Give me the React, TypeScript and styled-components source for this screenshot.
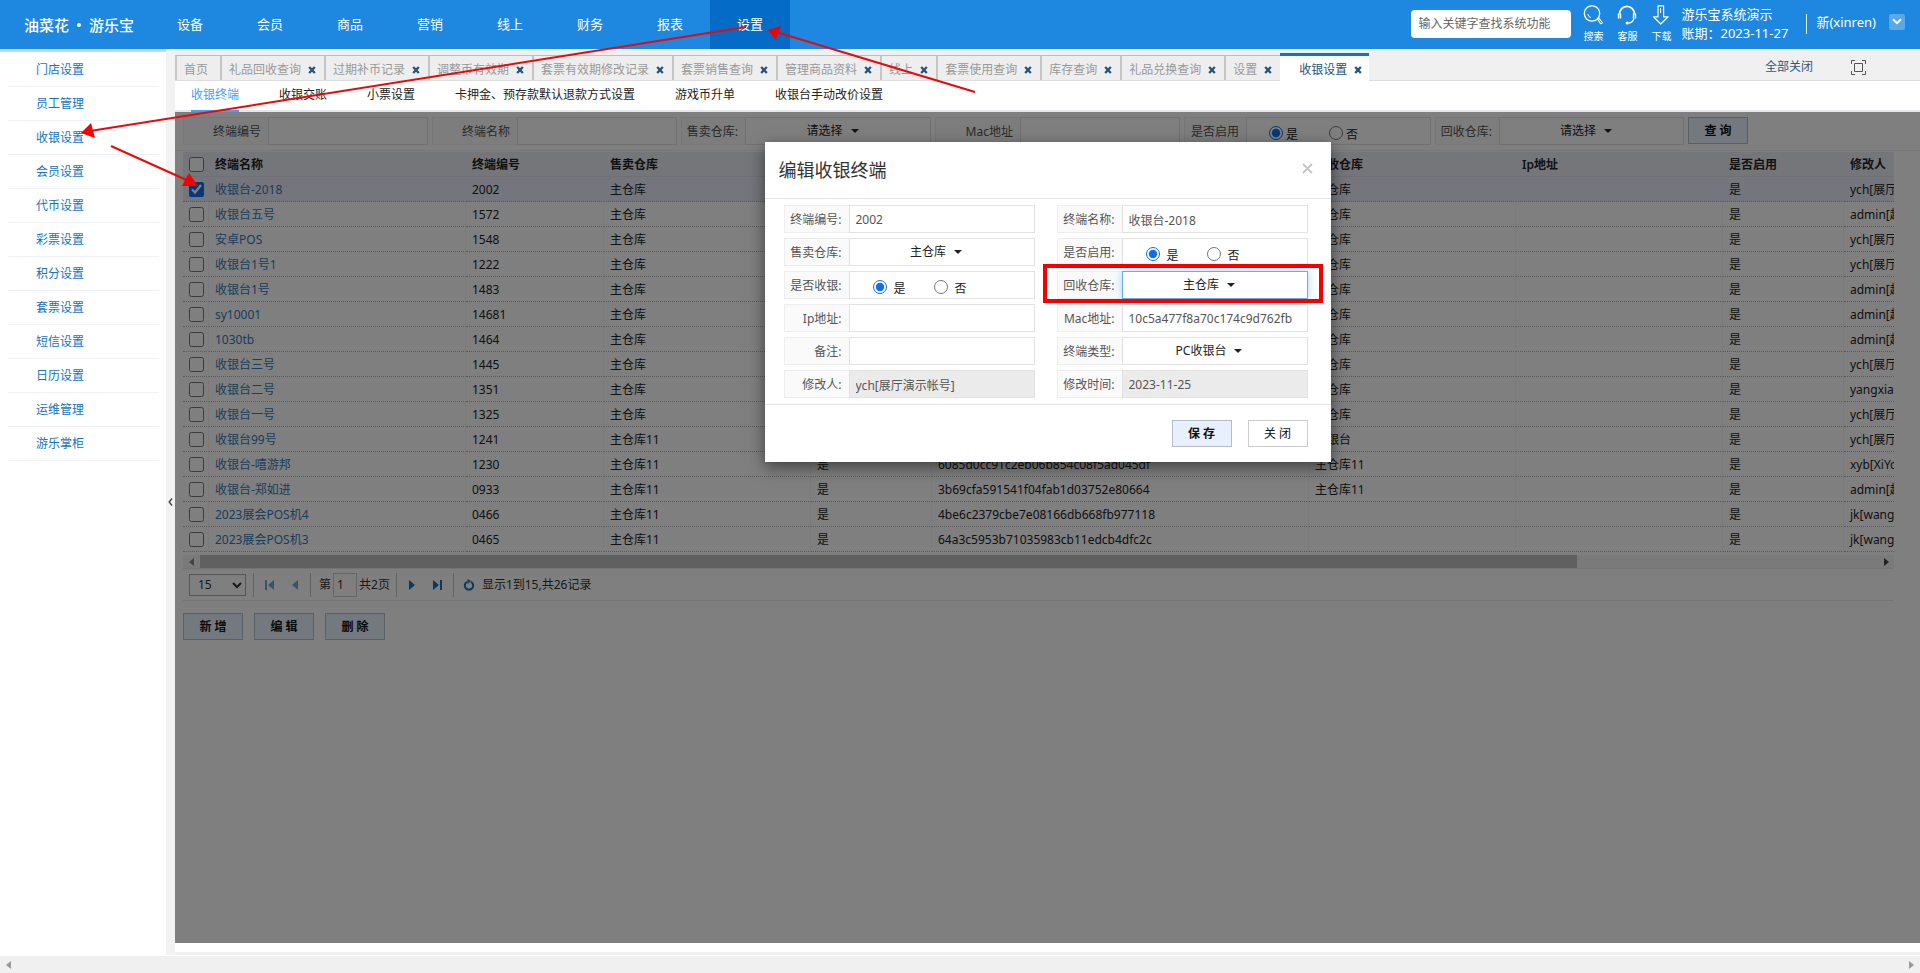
import React from "react";
import styled, { createGlobalStyle, css } from "styled-components";

const GlobalStyle = createGlobalStyle`
  * { box-sizing: border-box; }
  html, body { margin: 0; padding: 0; }
  body, button, input, select {
    font-family: "Noto Sans", "Noto Sans CJK SC", sans-serif;
    font-size: 12px;
    line-height: 16px;
    color: #333;
  }
  a { color: inherit; text-decoration: none; }
  button { cursor: pointer; margin: 0; }
`;

/* ---------- shell ---------- */

const Page = styled.div`
  position: relative;
  display: flex;
  flex-direction: column;
  min-height: 100vh;
  background: #f0f0f0;
  overflow: hidden;
`;

const Body = styled.div`
  display: flex;
  flex: 1;
  border-bottom: 1px solid #fff;
`;

const Header = styled.header`
  display: flex;
  align-items: center;
  height: 49px;
  background: #1e88e1;
  color: #fff;
  white-space: nowrap;
`;

const Logo = styled.div`
  width: 150px;
  padding-left: 24px;
  font-family: "Noto Sans CJK SC", sans-serif;
  font-size: 15px;
  line-height: 20px;
  font-weight: 500;
  display: flex;
  align-items: center;
  gap: 8px;
`;

const Dot = styled.i`
  width: 4px;
  height: 4px;
  border-radius: 50%;
  background: #fff;
`;

const Nav = styled.nav`
  display: flex;
  flex: 1;
`;

const NavLink = styled.a<{ $active?: boolean }>`
  width: 80px;
  font-size: 13px;
  line-height: 49px;
  text-align: center;
  background: ${(p) => (p.$active ? "#046bc6" : "transparent")};
`;

const HeaderTools = styled.div`
  display: flex;
  align-items: center;
  height: 49px;
  padding: 0 15px 2px 0;
`;

const SearchInput = styled.input`
  width: 160px;
  height: 28px;
  padding: 0 7px;
  border: 0;
  border-radius: 4px;
  background: #fff;
  margin-right: 10px;
  &::placeholder { color: #666; opacity: 1; }
`;

const Tool = styled.button`
  display: flex;
  flex-direction: column;
  align-items: center;
  gap: 4px;
  width: 24px;
  margin-right: 10px;
  padding: 0;
  border: 0;
  background: none;
  color: #fff;
  font-size: 10px;
  line-height: 14px;
`;

const Account = styled.div`
  font-size: 13px;
  line-height: 19px;
  padding: 0 13px 0 0;
  margin-left: -2px;
  min-width: 125px;
`;

const UserMenu = styled.button`
  display: flex;
  align-items: center;
  height: 20px;
  gap: 13px;
  padding: 0 0 4px 9px;
  border: 0;
  border-left: 1px solid #d6eafb;
  background: none;
  color: #fff;
  font-size: 13px;
`;

const Chevron = styled.span`
  display: flex;
  align-items: center;
  justify-content: center;
  width: 16px;
  height: 16px;
  border-radius: 2px;
  background: #5aa7e9;
`;

/* ---------- sidebar ---------- */

const Sidebar = styled.aside`
  width: 166px;
  padding: 1px 7px 0 8px;
  border-top: 3px solid #b9dffa;
  background: #fff;
`;

const SideLink = styled.a`
  display: block;
  height: 34px;
  padding: 9px 0 0 28px;
  border-bottom: 1px solid #eef2f6;
  color: #1673bd;
`;

const Splitter = styled.div`
  display: flex;
  align-items: center;
  justify-content: center;
  width: 9px;
  background: #f2f2f2;
`;

const SplitButton = styled.button`
  display: flex;
  padding: 0;
  border: 0;
  background: none;
`;

/* ---------- tabs ---------- */

const Main = styled.main`
  flex: 1;
  min-width: 0;
  display: flex;
  flex-direction: column;
  border-bottom: 3px solid #f0f0f0;
  background: #fff;
  padding-bottom: 9px;
`;

const TabBar = styled.div`
  display: flex;
  align-items: flex-end;
  height: 32px;
  background: #f0f0f0;
  border-bottom: 1px solid #ddd;
  white-space: nowrap;
`;

const Tab = styled.div<{ $active?: boolean; $home?: boolean }>`
  display: flex;
  align-items: center;
  gap: 7px;
  height: 25px;
  padding: ${(p) => (p.$home ? "4px 12px 0 7px" : "4px 8px 0 7px")};
  border-top: 1px solid #b4bfd0;
  border-left: 2px solid #c6c6c6;
  background: #eee;
  color: #999;
  ${(p) =>
    p.$active &&
    css`
      height: 28px;
      padding: 2px 7px 0 19px;
      margin-bottom: -1px;
      border-top: 3px solid #0d78bd;
      border-left: 0;
      background: #fff;
      color: #24527d;
    `}
`;

const TabClose = styled.button`
  display: flex;
  padding: 0;
  border: 0;
  background: none;
`;

const TabActions = styled.div`
  display: flex;
  align-items: center;
  gap: 38px;
  height: 26px;
  margin-left: auto;
  padding: 0 54px 0 0;
`;

const PlainButton = styled.button`
  display: flex;
  padding: 0;
  border: 0;
  background: none;
  color: #33547a;
`;

const SubTabs = styled.nav`
  display: flex;
  gap: 40px;
  height: 31px;
  padding-left: 16px;
  border-bottom: 2px solid #e4e7ed;
  background: #fff;
`;

const SubTab = styled.a<{ $active?: boolean }>`
  height: 31px;
  padding-top: 6px;
  border-bottom: 2px solid ${(p) => (p.$active ? "#409eff" : "transparent")};
  color: ${(p) => (p.$active ? "#409eff" : "#222")};
`;

/* ---------- workspace ---------- */

const Workspace = styled.section`
  position: relative;
  flex: 1;
  padding-top: 5px;
`;

const Filters = styled.form`
  display: flex;
  flex-wrap: wrap;
  gap: 4px;
  padding: 0 0 5px 8px;
  border-bottom: 1px solid #eee;
`;

const Field = styled.div<{ $label: number; $control: number }>`
  display: grid;
  grid-template-columns: ${(p) => p.$label}px ${(p) => p.$control}px;
  height: 28px;
`;

const FieldLabel = styled.label`
  display: flex;
  align-items: center;
  justify-content: flex-end;
  padding: 2px 7px 0 6px;
  border: 1px solid #eee;
  border-right: 0;
  background: #fafafa;
  color: #555;
  white-space: nowrap;
`;

const TextInput = styled.input`
  width: 100%;
  height: 28px;
  padding: 1px 12px 0 6px;
  border: 1px solid #e2e2e2;
  border-radius: 0;
  background: #fff;
  color: #555;
  outline: 0;
  &:disabled { background: #ebebeb; color: #555; }
`;

const SelectBox = styled.div<{ $focus?: boolean }>`
  display: flex;
  align-items: center;
  justify-content: center;
  height: 28px;
  padding: 0 11px 0 0;
  border: 1px solid #e2e2e2;
  background: #fff;
  ${(p) =>
    p.$focus &&
    css`
      border-color: #66afe9;
      box-shadow: 0 0 8px #a6d2f5;
    `}
`;

const SelectInput = styled.select`
  appearance: none;
  field-sizing: content;
  padding: 0 16px 0 0;
  border: 0;
  outline: 0;
  background: none;
  color: #222;
`;

const Caret = styled.i`
  width: 0;
  margin-left: -8px;
  border: 4px solid transparent;
  border-top-color: #222;
  border-bottom: 0;
`;

const RadioBox = styled.div<{ $roomy?: boolean }>`
  display: flex;
  align-items: center;
  gap: ${(p) => (p.$roomy ? 28 : 31)}px;
  height: 28px;
  padding: 3px 0 0 ${(p) => (p.$roomy ? 23 : 22)}px;
  border: 1px solid #e2e2e2;
  background: #fff;
`;

const RadioLabel = styled.label<{ $roomy?: boolean }>`
  display: flex;
  align-items: center;
  gap: ${(p) => (p.$roomy ? 7 : 3)}px;
  color: #222;
  input {
    width: 14px;
    height: 14px;
    margin: 0;
    accent-color: #0d6ff2;
  }
  span { padding-top: 5px; }
`;

const ActionButton = styled.button<{ $plain?: boolean }>`
  width: 60px;
  height: 27px;
  padding: 0;
  border: 1px solid ${(p) => (p.$plain ? "#ccc" : "#b4bccb")};
  background: ${(p) => (p.$plain ? "#fff" : "#e8f0fe")};
  color: #111;
  font-weight: ${(p) => (p.$plain ? 400 : 600)};
  text-align: center;
  white-space: pre;
`;

const GridWrap = styled.div`
  margin: 1px 26px 0 8px;
  overflow: hidden;
`;

const Grid = styled.table`
  width: 2600px;
  table-layout: fixed;
  border-collapse: separate;
  border-spacing: 0;
  text-align: left;
  white-space: nowrap;
`;

const Th = styled.th`
  height: 25px;
  padding: 2px 5px 0 6px;
  border-bottom: 1px solid #e0e0e8;
  border-right: 1px solid #efeff2;
  background: #ebecf2;
  font-weight: 600;
  color: #222;
`;

const Tr = styled.tr<{ $selected?: boolean }>`
  background: ${(p) => (p.$selected ? "#eaebfa" : "transparent")};
`;

const Td = styled.td`
  height: 25px;
  padding: 2px 5px 0 6px;
  border-bottom: 1px dotted #b5b5b5;
  border-right: 1px dotted #efefef;
  color: #222;
  a { color: #337ab7; }
`;

const Check = styled.input`
  display: block;
  width: 15px;
  height: 15px;
  margin: 0 0 2px;
  accent-color: #0d6ff2;
`;

const ScrollTrack = styled.div`
  display: flex;
  align-items: center;
  height: 13px;
  margin: 3px 26px 0 8px;
  padding: 0 5px 0 6px;
  background: #f4f4f4;
`;

const ScrollThumb = styled.div`
  width: 81%;
  height: 13px;
  margin: 0 auto 0 6px;
  background: #c1c1c1;
`;

const Pager = styled.div`
  display: flex;
  align-items: center;
  height: 33px;
  margin: 0 26px 0 8px;
  padding-left: 6px;
  border-top: 1px solid #e6e6e6;
  border-bottom: 1px solid #e6e6e6;
  color: #333;
`;

const PageSize = styled.select`
  width: 57px;
  height: 22px;
  margin-right: 4px;
  padding: 0 0 0 4px;
  border: 1px solid #aaa;
  border-radius: 0;
  background: #fff;
`;

const PagerSep = styled.i`
  width: 1px;
  height: 24px;
  margin: 0 3px;
  background: #c4c4c4;
`;

const PagerButton = styled.button`
  display: flex;
  align-items: center;
  justify-content: center;
  width: 25px;
  height: 20px;
  padding: 0;
  border: 0;
  background: none;
  color: #1673bd;
  &:disabled { color: #6fa9d6; }
`;

const PageJump = styled.label`
  display: flex;
  align-items: center;
  padding: 0 3px 0 5px;
`;

const PageNo = styled.input`
  width: 24px;
  height: 24px;
  margin: 0 2px;
  padding: 0 3px;
  border: 1px solid #ccc;
  background: #fff;
`;

const Actions = styled.div`
  display: flex;
  gap: 11px;
  margin-top: 12px;
  padding-left: 8px;
`;

/* ---------- dialog ---------- */

const Backdrop = styled.div`
  position: absolute;
  inset: 0;
  display: flex;
  align-items: flex-start;
  justify-content: center;
  padding-top: 30px;
  background: rgba(0, 0, 0, 0.5);
`;

const Dialog = styled.div`
  width: 566px;
  background: #fff;
  box-shadow: 0 5px 15px rgba(0, 0, 0, 0.5);
`;

const DialogHead = styled.div`
  display: flex;
  align-items: center;
  justify-content: space-between;
  height: 57px;
  padding: 0 18px 3px 14px;
  border-bottom: 1px solid #e5e5e5;
`;

const DialogTitle = styled.h4`
  margin: 0;
  padding-top: 2px;
  font-size: 18px;
  line-height: 24px;
  font-weight: 400;
`;

const DialogForm = styled.div`
  display: grid;
  grid-template-columns: 251px 251px;
  justify-content: space-between;
  gap: 5px;
  padding: 6px 23px 6px 19px;
`;

const Highlighted = styled.div`
  position: relative;
`;

const RedFrame = styled.i`
  position: absolute;
  inset: -7px -15px -4px -14px;
  border: 4px solid #f40000;
  pointer-events: none;
`;

const DialogFoot = styled.div`
  display: flex;
  justify-content: flex-end;
  gap: 16px;
  padding: 15px 23px 15px 0;
  border-top: 1px solid #e5e5e5;
`;

/* ---------- window scrollbar and arrows ---------- */

const WindowScroll = styled.div`
  display: flex;
  align-items: center;
  justify-content: space-between;
  height: 17px;
  padding: 0 6px;
  background: #f0f0f0;
`;

const ArrowLayer = styled.svg`
  position: absolute;
  left: 0;
  top: 0;
  width: 974px;
  height: 200px;
  overflow: visible;
  pointer-events: none;
`;

const Triangle = ({ left, color = "#999" }: { left?: boolean; color?: string }) => (
  <svg width="5" height="8" viewBox="0 0 5 8">
    <path d={left ? "M5 0v8L0 4z" : "M0 0v8l5-4z"} fill={color} />
  </svg>
);

const CloseMark = () => (
  <svg width="8" height="8" viewBox="0 0 8 8">
    <path d="M1.2 1l5.6 6M6.8 1L1.2 7" stroke="#24527d" strokeWidth="2.3" />
  </svg>
);

const SearchGlyph = () => (
  <svg width="20" height="20" viewBox="0 0 20 20" fill="none" stroke="#fff">
    <circle cx="9" cy="8.5" r="7.7" strokeWidth="1.3" />
    <path d="M4.8 9a4.4 4.4 0 0 0 3 3.6" strokeWidth="1" />
    <path d="M14.6 14.2l1.2-1 3.2 3.8c.8 1-.8 2.3-1.6 1.4z" strokeWidth="1.1" />
  </svg>
);

const HeadsetGlyph = () => (
  <svg width="20" height="20" viewBox="0 0 20 20" fill="none" stroke="#fff">
    <path d="M2.5 9.5C2.5 4.5 5.8 1.3 10 1.3s7.5 3.2 7.5 8.2" strokeWidth="1.8" />
    <path d="M1.5 8.5v5M3.5 8.5v5M16.5 8.5v5M18.5 8.5v5" strokeWidth="1.4" />
    <path d="M17 13.5c-.8 2.7-2.5 4.2-5.200 4.600" strokeWidth="1.2" />
    <circle cx="10.2" cy="18" r="1.6" fill="#fff" stroke="none" />
  </svg>
);

const DownloadGlyph = () => (
  <svg width="20" height="20" viewBox="0 0 20 20" fill="none" stroke="#fff">
    <path d="M7 .8h5.6v11h4.6L9.8 19 2.4 11.8H7z" strokeWidth="1.2" strokeLinejoin="round" />
    <path d="M9.6 3v5" strokeWidth="1" />
  </svg>
);

const NAV = ["设备", "会员", "商品", "营销", "线上", "财务", "报表", "设置"];
const SIDE = ["门店设置", "员工管理", "收银设置", "会员设置", "代币设置", "彩票设置", "积分设置", "套票设置", "短信设置", "日历设置", "运维管理", "游乐掌柜"];
const TABS = ["礼品回收查询", "过期补币记录", "调整币有效期", "套票有效期修改记录", "套票销售查询", "管理商品资料", "线上", "套票使用查询", "库存查询", "礼品兑换查询", "设置"];
const SUBTABS = ["收银终端", "收银交账", "小票设置", "卡押金、预存款默认退款方式设置", "游戏币升单", "收银台手动改价设置"];
const COLUMNS: [string, number][] = [
  ["终端名称", 257], ["终端编号", 138], ["售卖仓库", 207], ["是否收银", 121], ["Mac地址", 377],
  ["回收仓库", 207], ["Ip地址", 207], ["是否启用", 121], ["修改人", 200],
];

type Row = [string, string, string, string, string, string];
const ROWS: Row[] = [
  ["收银台-2018", "2002", "主仓库", "10c5a477f8a70c174c9d762fb", "主仓库", "ych[展厅演示帐号]"],
  ["收银台五号", "1572", "主仓库", "", "主仓库", "admin[超级管理员]"],
  ["安卓POS", "1548", "主仓库", "", "主仓库", "ych[展厅演示帐号]"],
  ["收银台1号1", "1222", "主仓库", "", "主仓库", "ych[展厅演示帐号]"],
  ["收银台1号", "1483", "主仓库", "", "主仓库", "admin[超级管理员]"],
  ["sy10001", "14681", "主仓库", "", "主仓库", "admin[超级管理员]"],
  ["1030tb", "1464", "主仓库", "", "主仓库", "admin[超级管理员]"],
  ["收银台三号", "1445", "主仓库", "", "主仓库", "ych[展厅演示帐号]"],
  ["收银台二号", "1351", "主仓库", "", "主仓库", "yangxia"],
  ["收银台一号", "1325", "主仓库", "", "主仓库", "ych[展厅演示帐号]"],
  ["收银台99号", "1241", "主仓库11", "", "收银台", "ych[展厅演示帐号]"],
  ["收银台-嘻游邦", "1230", "主仓库11", "6085d0cc91c2eb06b854c08f5ad045df", "主仓库11", "xyb[XiYou]"],
  ["收银台-郑如进", "0933", "主仓库11", "3b69cfa591541f04fab1d03752e80664", "主仓库11", "admin[超级管理员]"],
  ["2023展会POS机4", "0466", "主仓库11", "4be6c2379cbe7e08166db668fb977118", "", "jk[wang]"],
  ["2023展会POS机3", "0465", "主仓库11", "64a3c5953b71035983cb11edcb4dfc2c", "", "jk[wang]"],
];

type FieldProps = { id: string; label: string; lw?: number; cw?: number };

const InputField = ({ id, label, lw = 65, cw = 186, value = "", disabled }: FieldProps & { value?: string; disabled?: boolean }) => (
  <Field $label={lw} $control={cw}>
    <FieldLabel htmlFor={id}>{label}</FieldLabel>
    <TextInput id={id} defaultValue={value} disabled={disabled} />
  </Field>
);

const SelectField = ({ id, label, lw = 65, cw = 186, value, focus }: FieldProps & { value: string; focus?: boolean }) => (
  <Field $label={lw} $control={cw}>
    <FieldLabel htmlFor={id}>{label}</FieldLabel>
    <SelectBox $focus={focus}>
      <SelectInput id={id}>
        <option>{value}</option>
      </SelectInput>
      <Caret />
    </SelectBox>
  </Field>
);

const RadioField = ({ id, label, lw = 65, cw = 186, roomy }: FieldProps & { roomy?: boolean }) => (
  <Field $label={lw} $control={cw} role="radiogroup" aria-labelledby={id + "-label"}>
    <FieldLabel as="span" id={id + "-label"}>{label}</FieldLabel>
    <RadioBox $roomy={roomy}>
      <RadioLabel $roomy={roomy}>
        <input type="radio" name={id} defaultChecked />
        <span>是</span>
      </RadioLabel>
      <RadioLabel $roomy={roomy}>
        <input type="radio" name={id} />
        <span>否</span>
      </RadioLabel>
    </RadioBox>
  </Field>
);

export default function App() {
  return (
    <Page>
      <GlobalStyle />
      <Header>
        <Logo>油菜花<Dot />游乐宝</Logo>
        <Nav>
          {NAV.map((n) => (
            <NavLink key={n} href="#" $active={n === "设置"}>{n}</NavLink>
          ))}
        </Nav>
        <HeaderTools>
          <SearchInput placeholder="输入关键字查找系统功能" aria-label="查找系统功能" />
          <Tool><SearchGlyph />搜索</Tool>
          <Tool><HeadsetGlyph />客服</Tool>
          <Tool><DownloadGlyph />下载</Tool>
          <Account>
            <div>游乐宝系统演示</div>
            <div>账期：2023-11-27</div>
          </Account>
          <UserMenu>
            新(xinren)
            <Chevron>
              <svg width="10" height="7" viewBox="0 0 10 7" fill="none">
                <path d="M1 1.2l4 4 4-4" stroke="#fff" strokeWidth="2" />
              </svg>
            </Chevron>
          </UserMenu>
        </HeaderTools>
      </Header>

      <Body>
        <Sidebar>
          {SIDE.map((s) => (
            <SideLink key={s} href="#">{s}</SideLink>
          ))}
        </Sidebar>
        <Splitter>
          <SplitButton aria-label="收起菜单">
            <svg width="5" height="8" viewBox="0 0 5 8" fill="none">
              <path d="M4 .5L1.2 4 4 7.5" stroke="#444" strokeWidth="1.4" />
            </svg>
          </SplitButton>
        </Splitter>

        <Main>
          <TabBar>
            <Tab $home>首页</Tab>
            {TABS.map((t) => (
              <Tab key={t}>
                {t}
                <TabClose aria-label="关闭"><CloseMark /></TabClose>
              </Tab>
            ))}
            <Tab $active>
              收银设置
              <TabClose aria-label="关闭"><CloseMark /></TabClose>
            </Tab>
            <TabActions>
              <PlainButton>全部关闭</PlainButton>
              <PlainButton aria-label="全屏">
                <svg width="15" height="15" viewBox="0 0 15 15" fill="none" stroke="#555">
                  <path d="M.5 4V.5H4M11 .5h3.5V4M14.5 11v3.5H11M4 14.5H.5V11M3.5 3.5h8v8h-8z" />
                </svg>
              </PlainButton>
            </TabActions>
          </TabBar>
          <SubTabs>
            {SUBTABS.map((s, i) => (
              <SubTab key={s} href="#" $active={i === 0}>{s}</SubTab>
            ))}
          </SubTabs>

          <Workspace>
            <Filters>
              <InputField id="f-no" label="终端编号" lw={85} cw={160} />
              <InputField id="f-name" label="终端名称" lw={85} cw={160} />
              <SelectField id="f-sale" label="售卖仓库:" lw={64} value="请选择" />
              <InputField id="f-mac" label="Mac地址" lw={85} cw={160} />
              <RadioField id="f-on" label="是否启用" lw={62} cw={185} />
              <SelectField id="f-back" label="回收仓库:" lw={64} cw={185} value="请选择" />
              <ActionButton type="button">查 询</ActionButton>
            </Filters>

            <GridWrap>
              <Grid>
                <colgroup>
                  <col width="26" />
                  {COLUMNS.map(([c, w]) => <col key={c} width={w} />)}
                  <col />
                </colgroup>
                <thead>
                  <tr>
                    <Th><Check type="checkbox" aria-label="全选" /></Th>
                    {COLUMNS.map(([c]) => <Th key={c}>{c}</Th>)}
                    <Th />
                  </tr>
                </thead>
                <tbody>
                  {ROWS.map(([name, no, sale, mac, back, by], i) => (
                    <Tr key={no} $selected={i === 0}>
                      <Td><Check type="checkbox" aria-label={name} defaultChecked={i === 0} /></Td>
                      <Td><a href="#">{name}</a></Td>
                      <Td>{no}</Td>
                      <Td>{sale}</Td>
                      <Td>是</Td>
                      <Td>{mac}</Td>
                      <Td>{back}</Td>
                      <Td />
                      <Td>是</Td>
                      <Td>{by}</Td>
                      <Td />
                    </Tr>
                  ))}
                </tbody>
              </Grid>
            </GridWrap>
            <ScrollTrack>
              <Triangle left color="#888" />
              <ScrollThumb />
              <Triangle color="#444" />
            </ScrollTrack>
            <Pager>
              <PageSize aria-label="每页条数"><option>15</option></PageSize>
              <PagerSep />
              <PagerButton disabled aria-label="首页">
                <svg width="10" height="10" viewBox="0 0 10 10" fill="currentColor"><path d="M0 0h2v10H0zM9 0v10L3 5z" /></svg>
              </PagerButton>
              <PagerButton disabled aria-label="上一页">
                <svg width="8" height="10" viewBox="0 0 8 10" fill="currentColor"><path d="M7 0v10L1 5z" /></svg>
              </PagerButton>
              <PagerSep />
              <PageJump>
                第<PageNo defaultValue="1" />共2页
              </PageJump>
              <PagerSep />
              <PagerButton aria-label="下一页">
                <svg width="8" height="10" viewBox="0 0 8 10" fill="currentColor"><path d="M1 0v10l6-5z" /></svg>
              </PagerButton>
              <PagerButton aria-label="末页">
                <svg width="10" height="10" viewBox="0 0 10 10" fill="currentColor"><path d="M8 0h2v10H8zM1 0v10l6-5z" /></svg>
              </PagerButton>
              <PagerSep />
              <PagerButton aria-label="刷新">
                <svg width="12" height="12" viewBox="0 0 12 12" fill="none">
                  <path d="M4 2.8a4.2 4.2 0 1 0 4 0" stroke="currentColor" strokeWidth="2" />
                  <path d="M4.500 0v5L8 2z" fill="currentColor" />
                </svg>
              </PagerButton>
              显示1到15,共26记录
            </Pager>
            <Actions>
              <ActionButton>新 增</ActionButton>
              <ActionButton>编 辑</ActionButton>
              <ActionButton>删 除</ActionButton>
            </Actions>

            <Backdrop>
              <Dialog role="dialog" aria-labelledby="dlg-title">
                <DialogHead>
                  <DialogTitle id="dlg-title">编辑收银终端</DialogTitle>
                  <PlainButton aria-label="关闭">
                    <svg width="11" height="11" viewBox="0 0 11 11">
                      <path d="M1 1l9 9M10 1l-9 9" stroke="#c4c4c4" strokeWidth="1.8" />
                    </svg>
                  </PlainButton>
                </DialogHead>
                <DialogForm>
                  <InputField id="d-no" label="终端编号:" value="2002" />
                  <InputField id="d-name" label="终端名称:" value="收银台-2018" />
                  <SelectField id="d-sale" label="售卖仓库:" value="主仓库" />
                  <RadioField id="d-on" label="是否启用:" roomy />
                  <RadioField id="d-cash" label="是否收银:" roomy />
                  <Highlighted>
                    <SelectField id="d-back" label="回收仓库:" value="主仓库" focus />
                    <RedFrame />
                  </Highlighted>
                  <InputField id="d-ip" label="Ip地址:" />
                  <InputField id="d-mac" label="Mac地址:" value="10c5a477f8a70c174c9d762fb" />
                  <InputField id="d-note" label="备注:" />
                  <SelectField id="d-type" label="终端类型:" value="PC收银台" />
                  <InputField id="d-by" label="修改人:" value="ych[展厅演示帐号]" disabled />
                  <InputField id="d-at" label="修改时间:" value="2023-11-25" disabled />
                </DialogForm>
                <DialogFoot>
                  <ActionButton>保 存</ActionButton>
                  <ActionButton $plain>关 闭</ActionButton>
                </DialogFoot>
              </Dialog>
            </Backdrop>
          </Workspace>
        </Main>
      </Body>

      <WindowScroll>
        <Triangle left />
        <Triangle />
      </WindowScroll>

      <ArrowLayer>
        <g stroke="#e60a0a" strokeWidth="2" fill="none">
          <path d="M746 27L90 131" />
          <path d="M111 146l80 36" />
          <path d="M975 92L776 32" />
        </g>
        <g fill="#f40000">
          <path d="M81 133l10-10 4 15z" />
          <path d="M198 186l-9-13-7 13z" />
          <path d="M768 30l13-4-5 14z" />
        </g>
      </ArrowLayer>
    </Page>
  );
}
